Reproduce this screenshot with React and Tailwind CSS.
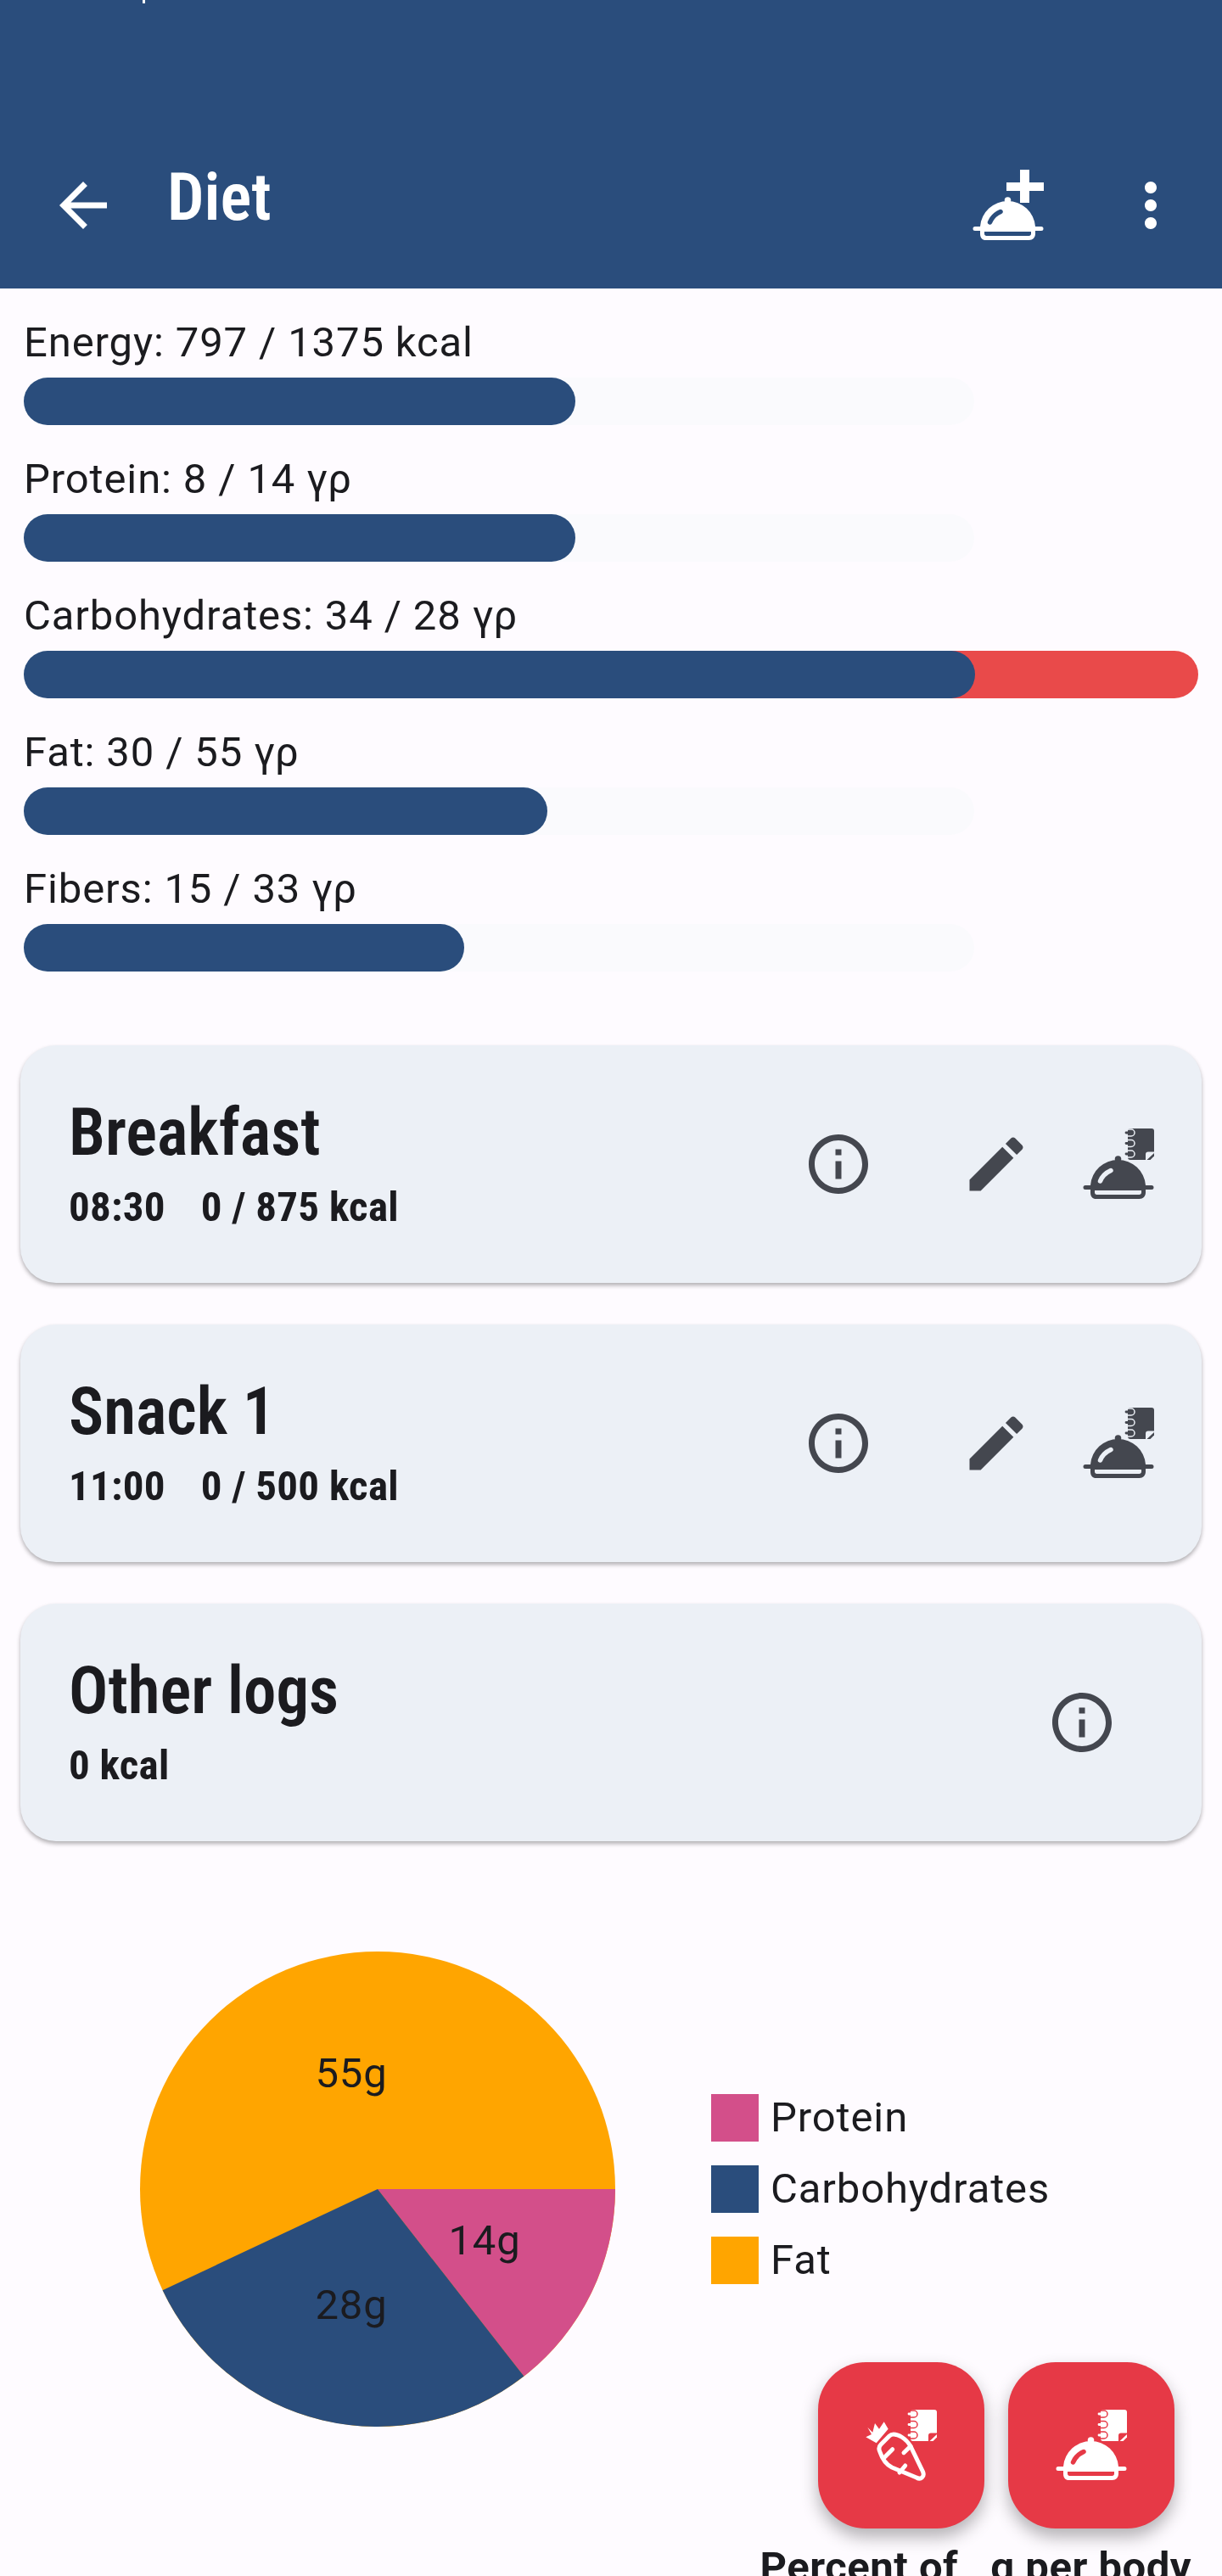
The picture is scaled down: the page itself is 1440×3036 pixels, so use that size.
import React from 'react'

const stats = [
  { label: 'Energy: 797 / 1375 kcal', value: 650 },
  { label: 'Protein: 8 / 14 γρ', value: 650 },
  { label: 'Carbohydrates: 34 / 28 γρ', value: 1121, over: 264 },
  { label: 'Fat: 30 / 55 γρ', value: 617 },
  { label: 'Fibers: 15 / 33 γρ', value: 519 },
]

const meals = [
  { title: 'Breakfast', time: '08:30', kcal: '0 / 875 kcal' },
  { title: 'Snack 1', time: '11:00', kcal: '0 / 500 kcal' },
]

const legend = [
  { label: 'Protein', color: 'bg-[#d34f8a]' },
  { label: 'Carbohydrates', color: 'bg-[#2a4d7c]' },
  { label: 'Fat', color: 'bg-[#ffa500]' },
]

function Dish({ cut }) {
  return (
    <>
      <circle cx="41.500" cy="36" r="3.800" />
      <path fillRule="evenodd" d="M41.500 37A32.500 32.500 0 0 1 74 67h7a2.500 2.500 0 0 1 0 5h-7v3.500c0 4.500-3 7.500-7.500 7.500h-50C12 83.500 9 80.500 9 75.500V72H3a2.500 2.500 0 0 1 0-5h6A32.500 32.500 0 0 1 41.500 37zM14 73v2.500c0 1.500 1 2.500 2.500 2.500h50c1.500 0 2.500-1 2.500-2.500V73z" />
      <path d="M20.500 62c2-5 7-10 12.500-12.500" fill="none" stroke={cut} strokeWidth="5.500" strokeLinecap="round" />
    </>
  )
}

function Notebook({ cut }) {
  return (
    <>
      <path d="M56 0h25a3 3 0 0 1 3 3v31a3 3 0 0 1-3 3H56a3 3 0 0 1-3-3V3a3 3 0 0 1 3-3z" />
      <path d="M52 1h5a4 4 0 0 1 0 8h-5M52 13.500h5a4 4 0 0 1 0 8h-5M52 26h5a4 4 0 0 1 0 8h-5" fill="none" stroke={cut} strokeWidth="1.500" />
      <path d="M51 5h6M51 17.500h6M51 30h6" stroke="currentColor" strokeWidth="2.800" strokeLinecap="round" />
      <path d="M77 27.500h7V37h-10v-6.500a3 3 0 0 1 3-3z" fill={cut} />
      <path d="M75.500 37L84 29v3.500L79.500 37z" fill="currentColor" />
    </>
  )
}

function DishNoteIcon({ cut }) {
  return (
    <svg width="84" height="84" viewBox="0 0 84 84" fill="currentColor">
      <Notebook cut={cut} />
      <Dish cut={cut} />
    </svg>
  )
}

function CarrotNoteIcon({ cut }) {
  return (
    <svg width="84" height="84" viewBox="0 0 84 84" fill="currentColor">
      <Notebook cut={cut} />
      <path d="M.3 32.300L7 29 2.300 20.700 8.300 26.700 11 16 16 22.700 21.700 14.300 26.700 22.700 12.700 39.300z" />
      <path d="M33 29c5 0 14 4 20 14l14.500 30c2.500 6-2.500 10-7.500 7L31 68c-8-4-12-12-14-18-2-4-1-7 1-9l10-10c1.500-1.500 3-2 5-2z" fill="none" stroke="currentColor" strokeWidth="5" strokeLinejoin="round" />
      <path d="M21.700 56.700l10-10M45 50.700l8-7.700M40 74l6.700-8" fill="none" stroke="currentColor" strokeWidth="5" strokeLinecap="round" />
    </svg>
  )
}

function InfoIcon() {
  return (
    <svg width="84" height="84" viewBox="0 0 24 24" fill="currentColor">
      <path d="M11 7h2v2h-2zm0 4h2v6h-2zm1-9C6.480 2 2 6.480 2 12s4.480 10 10 10 10-4.480 10-10S17.520 2 12 2zm0 18c-4.410 0-8-3.590-8-8s3.590-8 8-8 8 3.590 8 8-3.590 8-8 8z" />
    </svg>
  )
}

function EditIcon() {
  return (
    <svg width="84" height="84" viewBox="0 0 24 24" fill="currentColor">
      <path d="M3 17.250V21h3.750L17.810 9.940l-3.750-3.750L3 17.250zM20.710 7.040c.39-.39.39-1.020 0-1.410l-2.340-2.340c-.39-.39-1.020-.39-1.410 0l-1.830 1.830 3.750 3.750 1.830-1.830z" />
    </svg>
  )
}

function Header() {
  return (
    <div className="h-[340px] bg-[#2a4d7c] pt-[144px] text-white relative">
      <div className="absolute left-[168px] top-0 w-[3px] h-[4px] bg-white" />
      <div className="h-[196px] flex items-center pl-[56px] pr-[42px]">
        <svg width="84" height="84" viewBox="0 0 24 24" fill="currentColor">
          <path d="M20 11H7.830l5.590-5.590L12 4l-8 8 8 8 1.410-1.410L7.830 13H20v-2z" />
        </svg>
        <div className="ml-[57px] mb-[18px] text-[77px] leading-[90px] font-semibold [font-stretch:condensed]">Diet</div>
        <div className="ml-auto flex items-center">
          <svg width="84" height="84" viewBox="0 0 84 84" fill="currentColor">
            <path d="M40 15h16V0h11v15h17v10H67v14H56V25H40z" />
            <Dish cut="#2a4d7c" />
          </svg>
          <svg className="ml-[84px]" width="84" height="84" viewBox="0 0 24 24" fill="currentColor">
            <path d="M12 8c1.100 0 2-.9 2-2s-.9-2-2-2-2 .9-2 2 .9 2 2 2zm0 2c-1.100 0-2 .9-2 2s.9 2 2 2 2-.9 2-2-.9-2-2-2zm0 6c-1.100 0-2 .9-2 2s.9 2 2 2 2-.9 2-2-.9-2-2-2z" />
          </svg>
        </div>
      </div>
    </div>
  )
}

function Stat({ label, value, over }) {
  return (
    <div className="mb-[35px]">
      <div className="text-[49px] leading-[58px] tracking-[0.875px] text-[#1b1b1f]">{label}</div>
      <div className="mt-[12px] relative h-[56px] w-[1120px] rounded-full bg-[#fafafd]">
        {over ? <div className="absolute top-0 right-[-264px] h-[56px] rounded-r-full bg-[#e94a4a]" style={{ width: over + 60 }} /> : null}
        <div className="absolute left-0 top-0 h-[56px] rounded-full bg-[#2a4d7c]" style={{ width: value }} />
      </div>
    </div>
  )
}

function Card({ title, time, kcal, children }) {
  return (
    <div className="h-[280px] mb-[49px] rounded-[42px] bg-[#ecf0f6] shadow-[0_3px_5px_rgba(0,0,0,0.3)] flex items-center pl-[57px] text-[#1b1b1f]">
      <div className="flex-1">
        <div className="mt-[-2px] text-[77px] leading-[90px] font-semibold [font-stretch:condensed]">{title}</div>
        <div className="mt-[14px] flex gap-[42px] text-[49px] leading-[58px] tracking-[0.25px] font-bold [font-stretch:condensed]">
          {time ? <span>{time}</span> : null}
          <span>{kcal}</span>
        </div>
      </div>
      <div className="flex items-center text-[#44474f]">{children}</div>
    </div>
  )
}

function PieChart() {
  return (
    <svg width="560" height="560" viewBox="0 0 560 560" className="text-[#1b1b1f] shrink-0">
      <circle cx="280" cy="280" r="280" fill="#ffa500" />
      <path d="M280 280L560 280A280 280 0 0 1 452.400 500.600z" fill="#d34f8a" />
      <path d="M280 280L452.400 500.600A280 280 0 0 1 26.600 399.200z" fill="#2a4d7c" />
      <g fontSize="49" fill="currentColor" textAnchor="middle" fontFamily="Roboto, sans-serif" letterSpacing="0.875">
        <text x="249" y="160">55g</text>
        <text x="406" y="357">14g</text>
        <text x="249" y="433">28g</text>
      </g>
    </svg>
  )
}

export default function App() {
  return (
    <div className="relative w-[1440px] h-[3036px] overflow-hidden bg-[#fefbff] font-['Roboto',sans-serif]">
      <Header />
      <div className="pl-[28px] pt-[35px] h-[892px]">
        {stats.map((s) => <Stat key={s.label} {...s} />)}
      </div>
      <div className="px-[24px]">
        {meals.map((m) => (
          <Card key={m.title} title={m.title} time={m.time} kcal={m.kcal}>
            <InfoIcon />
            <div className="ml-[102px]"><EditIcon /></div>
            <div className="ml-[60px] mr-[56px]"><DishNoteIcon cut="#ecf0f6" /></div>
          </Card>
        ))}
        <Card title="Other logs" kcal="0 kcal">
          <div className="mr-[99px]"><InfoIcon /></div>
        </Card>
      </div>
      <div className="mt-[130px] flex items-center pl-[165px]">
        <PieChart />
        <div className="ml-[113px] flex flex-col gap-[28px]">
          {legend.map((l) => (
            <div key={l.label} className="flex items-center h-[56px]">
              <div className={`w-[56px] h-[56px] ${l.color}`} />
              <span className="ml-[14px] text-[49px] tracking-[0.875px] text-[#1b1b1f]">{l.label}</span>
            </div>
          ))}
        </div>
      </div>
      <div className="mt-[137px] pr-[36px] text-right text-[49px] leading-[58px] tracking-[0.5px] font-bold text-[#1b1b1f]">Percent of{'\u00a0\u00a0\u00a0'}g per body</div>
      <div className="absolute left-[964px] top-[2784px] flex gap-[28px]">
        <button className="w-[196px] h-[196px] rounded-[56px] bg-[#e63946] text-white flex items-center justify-center shadow-[0_10px_20px_rgba(0,0,0,0.3)]">
          <CarrotNoteIcon cut="#e63946" />
        </button>
        <button className="w-[196px] h-[196px] rounded-[56px] bg-[#e63946] text-white flex items-center justify-center shadow-[0_10px_20px_rgba(0,0,0,0.3)]">
          <DishNoteIcon cut="#e63946" />
        </button>
      </div>
    </div>
  )
}
